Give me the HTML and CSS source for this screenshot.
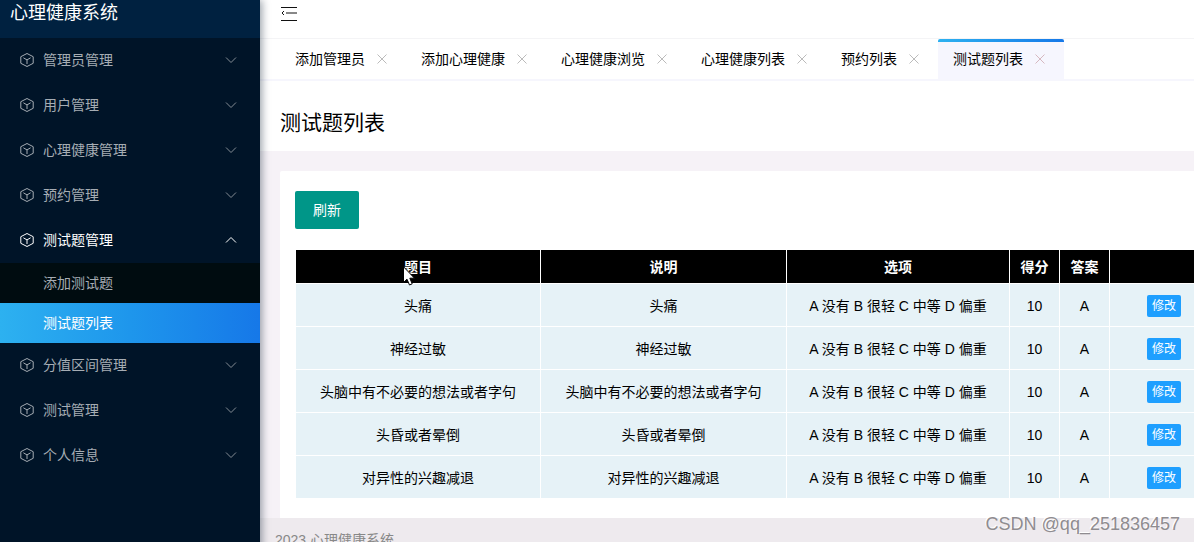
FILE: index.html
```html
<!DOCTYPE html>
<html lang="zh-CN">
<head>
<meta charset="utf-8">
<title>测试题列表</title>
<link rel="stylesheet" href="styles.css">
</head>
<body>
<svg class="defs" aria-hidden="true">
  <symbol id="cube" viewBox="0 0 14 14"><path d="M7 .5 13.2 3.7V10.3L7 13.5 .8 10.3V3.7ZM3.4 4.8 7 6.9 10.6 4.8M7 6.9V11"/></symbol>
  <symbol id="down" viewBox="0 0 12 8"><path d="M1 1.5 6 6.5 11 1.5"/></symbol>
  <symbol id="up" viewBox="0 0 12 8"><path d="M1 6.5 6 1.5 11 6.5"/></symbol>
  <symbol id="cross" viewBox="0 0 10 10"><path d="M.5 .5 9.5 9.5M9.5 .5 .5 9.5"/></symbol>
</svg>
<div class="app">
  <aside class="sidebar">
    <div class="brand">心理健康系统</div>
    <nav>
      <ul class="menu">
        <li><a class="item" href="#"><svg class="cube"><use href="#cube"/></svg><span>管理员管理</span><svg class="arrow"><use href="#down"/></svg></a></li>
        <li><a class="item" href="#"><svg class="cube"><use href="#cube"/></svg><span>用户管理</span><svg class="arrow"><use href="#down"/></svg></a></li>
        <li><a class="item" href="#"><svg class="cube"><use href="#cube"/></svg><span>心理健康管理</span><svg class="arrow"><use href="#down"/></svg></a></li>
        <li><a class="item" href="#"><svg class="cube"><use href="#cube"/></svg><span>预约管理</span><svg class="arrow"><use href="#down"/></svg></a></li>
        <li>
          <a class="item open" href="#"><svg class="cube"><use href="#cube"/></svg><span>测试题管理</span><svg class="arrow"><use href="#up"/></svg></a>
          <ul class="submenu">
            <li><a class="subitem" href="#">添加测试题</a></li>
            <li><a class="subitem current" href="#">测试题列表</a></li>
          </ul>
        </li>
        <li><a class="item" href="#"><svg class="cube"><use href="#cube"/></svg><span>分值区间管理</span><svg class="arrow"><use href="#down"/></svg></a></li>
        <li><a class="item" href="#"><svg class="cube"><use href="#cube"/></svg><span>测试管理</span><svg class="arrow"><use href="#down"/></svg></a></li>
        <li><a class="item" href="#"><svg class="cube"><use href="#cube"/></svg><span>个人信息</span><svg class="arrow"><use href="#down"/></svg></a></li>
      </ul>
    </nav>
  </aside>
  <div class="content">
    <header class="topbar">
      <button class="fold" type="button" aria-label="收起菜单"><svg viewBox="0 0 16 14"><path d="M0 .5H16M5 6H16M0 13.5H16M3 4 1 6 3 8"/></svg></button>
    </header>
    <ul class="tabs">
      <li class="tab"><a href="#">添加管理员</a><button type="button" aria-label="关闭"><svg><use href="#cross"/></svg></button></li>
      <li class="tab"><a href="#">添加心理健康</a><button type="button" aria-label="关闭"><svg><use href="#cross"/></svg></button></li>
      <li class="tab"><a href="#">心理健康浏览</a><button type="button" aria-label="关闭"><svg><use href="#cross"/></svg></button></li>
      <li class="tab"><a href="#">心理健康列表</a><button type="button" aria-label="关闭"><svg><use href="#cross"/></svg></button></li>
      <li class="tab"><a href="#">预约列表</a><button type="button" aria-label="关闭"><svg><use href="#cross"/></svg></button></li>
      <li class="tab active"><a href="#">测试题列表</a><button type="button" aria-label="关闭"><svg><use href="#cross"/></svg></button></li>
    </ul>
    <h1 class="title">测试题列表</h1>
    <main class="page">
      <section class="card">
        <button class="refresh" type="button">刷新</button>
        <table class="grid">
          <colgroup><col class="first"><col class="wide"><col class="options"><col class="small"><col class="small"><col></colgroup>
          <thead><tr><th>题目</th><th>说明</th><th>选项</th><th>得分</th><th>答案</th><th></th></tr></thead>
          <tbody>
            <tr><td>头痛</td><td>头痛</td><td>A 没有 B 很轻 C 中等 D 偏重</td><td>10</td><td>A</td><td><button class="edit" type="button">修改</button></td></tr>
            <tr><td>神经过敏</td><td>神经过敏</td><td>A 没有 B 很轻 C 中等 D 偏重</td><td>10</td><td>A</td><td><button class="edit" type="button">修改</button></td></tr>
            <tr><td>头脑中有不必要的想法或者字句</td><td>头脑中有不必要的想法或者字句</td><td>A 没有 B 很轻 C 中等 D 偏重</td><td>10</td><td>A</td><td><button class="edit" type="button">修改</button></td></tr>
            <tr><td>头昏或者晕倒</td><td>头昏或者晕倒</td><td>A 没有 B 很轻 C 中等 D 偏重</td><td>10</td><td>A</td><td><button class="edit" type="button">修改</button></td></tr>
            <tr><td>对异性的兴趣减退</td><td>对异性的兴趣减退</td><td>A 没有 B 很轻 C 中等 D 偏重</td><td>10</td><td>A</td><td><button class="edit" type="button">修改</button></td></tr>
          </tbody>
        </table>
      </section>
    </main>
    <footer class="footer">2023 心理健康系统</footer>
  </div>
</div>
<svg class="pointer" viewBox="0 0 12 20" aria-hidden="true"><path d="M.5 .8V16.5L4 13.2 6.5 19 9.2 17.8 6.8 12.2H11.5Z"/></svg>
<div class="watermark">CSDN @qq_251836457</div>
</body>
</html>
```
FILE: styles.css
```css
* { box-sizing: border-box; }

body {
  margin: 0;
  position: relative;
  height: 100vh;
  overflow: hidden;
  font: 14px/20px "Liberation Sans", "Noto Sans CJK SC", sans-serif;
  color: #000;
  background: #eeeaee;
}

ul { list-style: none; margin: 0; padding: 0; }
a { color: inherit; text-decoration: none; }
button { font: inherit; border: 0; padding: 0; background: none; cursor: pointer; }
svg { fill: none; stroke: currentColor; display: block; }
.defs { position: absolute; width: 0; height: 0; }

.app { display: flex; min-height: 100%; }

.sidebar {
  flex: 0 0 260px;
  background: #001428;
  color: #a6adb4;
  box-shadow: 2px 0 8px rgba(0, 21, 41, 0.4);
  z-index: 1;
}
.brand {
  height: 38px;
  padding-left: 10px;
  font-size: 18px;
  line-height: 26px;
  color: #fff;
  background: #002140;
}
.item {
  display: flex;
  align-items: center;
  height: 45px;
  padding: 0 23px 1px 20px;
}
.item.open { color: #fff; }
.cube { width: 14px; height: 14px; margin-right: 9px; }
.arrow { width: 12px; height: 8px; margin-left: auto; color: #858d95; }
.open .arrow { color: #fff; }
.submenu { background: #000c10; }
.subitem { display: block; padding-left: 43px; line-height: 40px; }
.subitem.current { color: #fff; background: linear-gradient(90deg, #2db1f0, #1e96ec 50%, #1678e8); }

.content { flex: 1; min-width: 0; display: flex; flex-direction: column; }
.topbar { height: 39px; padding: 7px 20px 0; background: #fff; border-bottom: 1px solid #f4f4f6; }
.fold { display: block; color: #111; }
.fold svg { width: 18px; height: 14px; }

.tabs { display: flex; height: 42px; padding-left: 20px; background: #fff; border-bottom: 2px solid #f6f6fd; }
.tab { display: flex; align-items: center; gap: 12px; padding: 0 19px 0 15px; white-space: nowrap; }
.tab button { color: #bbb; }
.tab svg { width: 10px; height: 10px; }
.tab.active {
  border-radius: 2px 2px 0 0;
  background: linear-gradient(90deg, #2db1f0, #1678e8) top / 100% 3px no-repeat #f6f6fe;
}
.tab.active button { color: #d6b8c0; }

.title { margin: 0; padding: 27px 20px 13px; font-size: 21px; line-height: 30px; font-weight: 400; background: #fff; }
.page { padding: 20px 0 0 20px; background: #f6f2f7; }
.card { padding: 20px 0 19px 15px; background: #fff; border-radius: 2px 0 0 0; overflow: hidden; }
.refresh { display: block; height: 38px; padding: 0 18px; margin-bottom: 20px; color: #fff; background: #009688; border-radius: 2px; }

.grid { width: 100%; min-width: 924px; table-layout: fixed; border-collapse: collapse; text-align: center; }
.first { width: 245px; }
.wide { width: 246px; }
.options { width: 223px; }
.small { width: 50px; }
.grid th, .grid td { border: 1px solid #fff; padding: 0; }
.grid th { height: 34px; color: #fff; background: #000; }
.grid td { height: 43px; padding-top: 2px; background: #e6f2f7; }
.edit {
  height: 22px;
  padding: 0 5px;
  font-size: 12px;
  line-height: 22px;
  color: #fff;
  background: #1e9fff;
  border-radius: 2px;
  vertical-align: middle;
}

.footer { flex: 1; padding: 12px 15px; color: #888; background: #eeeaee; }

.pointer { position: absolute; left: 403px; top: 266px; width: 12px; height: 20px; fill: #fff; stroke: #000; z-index: 2; }
.watermark { position: absolute; right: 14px; bottom: 6px; font-size: 18px; line-height: 24px; color: #8f8c90; text-shadow: -1px -1px 0 #fff; z-index: 2; }
```
